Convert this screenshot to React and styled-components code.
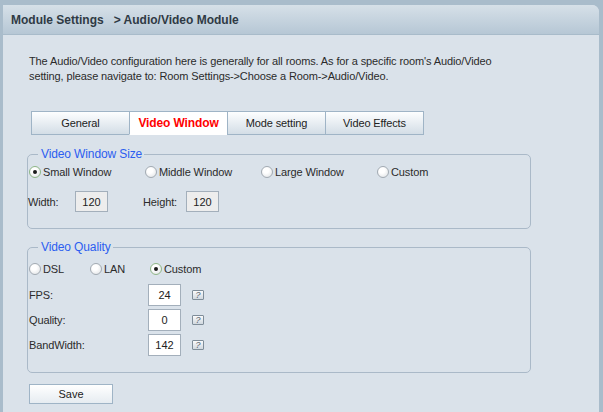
import React, { useState } from "react";
import styled, { createGlobalStyle } from "styled-components";

const GlobalStyle = createGlobalStyle`
  html, body {
    margin: 0;
    padding: 0;
    background: #a9bccb;
    font-family: "Liberation Sans", Arial, sans-serif;
    font-size: 11px;
    letter-spacing: -0.12px;
    color: #2b2b2b;
  }
`;

const Page = styled.div`
  height: 412px;
  padding: 5px 4px 0 3px;
  box-sizing: border-box;
  overflow: hidden;
`;

const Panel = styled.div`
  height: 100%;
  background: #dae2ea;
  border-radius: 0 7px 0 0;
  display: flex;
  flex-direction: column;
`;

const Header = styled.div`
  height: 29px;
  flex: none;
  display: flex;
  align-items: center;
  padding-left: 8px;
  background: linear-gradient(#d6e0e8, #b6c7d5);
  border-bottom: 1px solid #a8bbca;
  border-radius: 0 7px 0 0;
  font-size: 12px;
  font-weight: bold;
  letter-spacing: 0;
  color: #2f3a44;
  white-space: pre;
`;

const Body = styled.div`
  padding: 19px 0 0 23px;
`;

const Intro = styled.p`
  margin: 0 0 27px 3px;
  line-height: 15px;
  width: 480px;
`;

const TabBar = styled.div`
  display: flex;
  margin-left: 5px;
  margin-bottom: 12px;
`;

const Tab = styled.div`
  width: 99px;
  height: 24px;
  box-sizing: border-box;
  margin-left: -1px;
  display: flex;
  align-items: center;
  justify-content: center;
  border: 1px solid #9fb4c6;
  border-bottom-color: ${(p) => (p.$active ? "#ffffff" : "#9fb4c6")};
  background: ${(p) => (p.$active ? "#ffffff" : "linear-gradient(#fdfeff, #d3dde6)")};
  color: ${(p) => (p.$active ? "#ff0000" : "#222")};
  font-weight: ${(p) => (p.$active ? "bold" : "normal")};
  font-size: ${(p) => (p.$active ? "12px" : "11px")};
  cursor: pointer;
  &:first-child { margin-left: 0; }
`;

const Group = styled.fieldset`
  width: 504px;
  box-sizing: border-box;
  margin: 0 0 ${(p) => p.$mb || "11px"} 1px;
  padding: ${(p) => p.$pad || "3px 0 16px 0"};
  border: 1px solid #aab9c8;
  border-radius: 5px;
`;

const Legend = styled.legend`
  margin-left: 10px;
  padding: 0 2px 0 3px;
  color: #2c5ef0;
  font-size: 12px;
`;

const RadioRow = styled.div`
  display: flex;
  align-items: center;
  height: 16px;
  margin-bottom: ${(p) => p.$gap || "8px"};
`;

const RadioItem = styled.label`
  width: ${(p) => p.$w}px;
  display: flex;
  align-items: center;
  gap: 2px;
  cursor: pointer;
  padding-left: 1px;
`;

const RadioDot = styled.span`
  width: 12px;
  height: 12px;
  box-sizing: border-box;
  border-radius: 50%;
  border: 1px solid ${(p) => (p.$on ? "#8fb787" : "#a2aab2")};
  background: radial-gradient(circle at 40% 35%, #ffffff 30%, #dcdfe2 100%);
  display: flex;
  align-items: center;
  justify-content: center;
  &::after {
    content: "";
    width: 4px;
    height: 4px;
    border-radius: 50%;
    background: ${(p) => (p.$on ? "#1c1c1c" : "transparent")};
  }
`;

const SizeRow = styled.div`
  display: grid;
  grid-template-columns: 47px 33px 35px 43px 33px;
  align-items: center;
`;

const Label = styled.span`
  width: ${(p) => (p.$w ? `${p.$w}px` : "auto")};
`;

const NumBox = styled.input`
  width: 33px;
  height: ${(p) => (p.$h || 21)}px;
  box-sizing: border-box;
  border: 1px solid #a3afbb;
  background: ${(p) => (p.$dim ? "#ededed" : "#ffffff")};
  font-family: inherit;
  font-size: 11px;
  color: #222;
  text-align: center;
  padding: 0;
  outline: none;
`;

const FieldRow = styled.div`
  display: flex;
  align-items: center;
  padding-left: 1px;
  margin-top: ${(p) => p.$mt || "3px"};
`;

const Help = styled.span`
  width: 12px;
  height: 10px;
  margin-left: 11px;
  box-sizing: border-box;
  border: 1px solid #7f8d99;
  border-radius: 1px;
  background: linear-gradient(#fafbfc, #d0d8df);
  color: #5a6670;
  font-size: 9px;
  line-height: 8px;
  text-align: center;
  font-style: italic;
`;

const SaveButton = styled.button`
  width: 84px;
  height: 20px;
  margin: 0 0 0 3px;
  border: 1px solid #9fb4c6;
  background: linear-gradient(#ffffff, #e6ecf1);
  font-family: inherit;
  font-size: 11px;
  color: #222;
  cursor: pointer;
`;

const tabs = ["General", "Video Window", "Mode setting", "Video Effects"];
const sizes = [
  ["small", "Small Window"],
  ["middle", "Middle Window"],
  ["large", "Large Window"],
  ["custom", "Custom"],
];
const qualities = [
  ["dsl", "DSL", 60],
  ["lan", "LAN", 59],
  ["custom", "Custom", 80],
];

function Radio({ on, label, width, onPick }) {
  return (
    <RadioItem $w={width} onClick={onPick}>
      <RadioDot $on={on} />
      {label}
    </RadioItem>
  );
}

export default function App() {
  const [tab, setTab] = useState("Video Window");
  const [size, setSize] = useState("small");
  const [quality, setQuality] = useState("custom");

  return (
    <Page>
      <GlobalStyle />
      <Panel>
        <Header>{"Module Settings   > Audio/Video Module"}</Header>
        <Body>
          <Intro>
            The Audio/Video configuration here is generally for all rooms. As for a specific room's Audio/Video
            setting, please navigate to: Room Settings-&gt;Choose a Room-&gt;Audio/Video.
          </Intro>

          <TabBar>
            {tabs.map((t) => (
              <Tab key={t} $active={t === tab} onClick={() => setTab(t)}>
                {t}
              </Tab>
            ))}
          </TabBar>

          <Group>
            <Legend>Video Window Size</Legend>
            <RadioRow $gap="11px">
              {sizes.map(([k, l]) => (
                <Radio key={k} width={115} label={l} on={size === k} onPick={() => setSize(k)} />
              ))}
            </RadioRow>
            <SizeRow>
              <Label>Width:</Label>
              <NumBox $dim readOnly value="120" />
              <span />
              <Label>Height:</Label>
              <NumBox $dim readOnly value="120" />
            </SizeRow>
          </Group>

          <Group $pad="7px 0 16px 0">
            <Legend>Video Quality</Legend>
            <RadioRow $gap="7px">
              {qualities.map(([k, l, w]) => (
                <Radio key={k} width={w} label={l} on={quality === k} onPick={() => setQuality(k)} />
              ))}
            </RadioRow>
            <FieldRow $mt="0">
              <Label $w={119}>FPS:</Label>
              <NumBox $h={22} defaultValue="24" />
              <Help>?</Help>
            </FieldRow>
            <FieldRow>
              <Label $w={119}>Quality:</Label>
              <NumBox $h={22} defaultValue="0" />
              <Help>?</Help>
            </FieldRow>
            <FieldRow>
              <Label $w={119}>BandWidth:</Label>
              <NumBox $h={22} defaultValue="142" />
              <Help>?</Help>
            </FieldRow>
          </Group>

          <SaveButton>Save</SaveButton>
        </Body>
      </Panel>
    </Page>
  );
}
